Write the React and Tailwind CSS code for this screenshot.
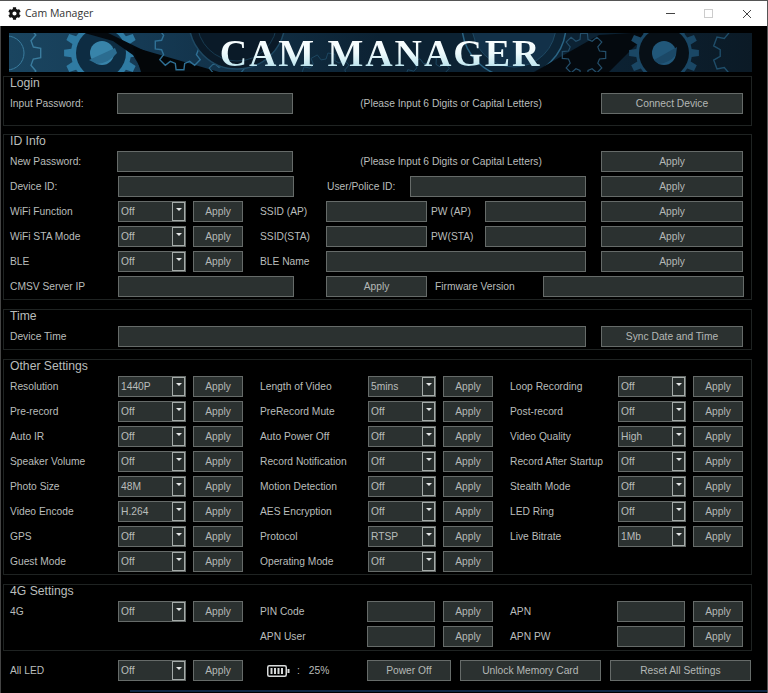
import { FaCog } from 'react-icons/fa';

const gearPath = (cx, cy, r, teeth, depth = 5) => {
  const pts = [];
  const step = (Math.PI * 2) / teeth;
  for (let i = 0; i < teeth; i++) {
    const a = i * step;
    const at = (rad, ang) =>
      `${(cx + rad * Math.cos(ang)).toFixed(1)} ${(cy + rad * Math.sin(ang)).toFixed(1)}`;
    pts.push(at(r - depth, a - step * 0.32));
    pts.push(at(r, a - step * 0.2));
    pts.push(at(r, a + step * 0.2));
    pts.push(at(r - depth, a + step * 0.32));
  }
  return `M${pts.join('L')}Z`;
};

const BannerArt = () => (
  <svg className="absolute inset-0" width="743" height="39" viewBox="0 0 743 39">
    <defs>
      <linearGradient id="bannerBg" x1="0" x2="1" y1="0" y2="0">
        <stop offset="0" stopColor="#1a4560" />
        <stop offset="0.18" stopColor="#153a54" />
        <stop offset="0.5" stopColor="#0c2233" />
        <stop offset="0.8" stopColor="#0c2233" />
        <stop offset="1" stopColor="#0b1a26" />
      </linearGradient>
    </defs>
    <rect width="743" height="39" fill="url(#bannerBg)" />
    {/* left outline gear */}
    <path d={gearPath(-2, 20, 34, 9, 7)} fill="none" stroke="#3a7c9e" strokeWidth="1.4" />
    <circle cx="-2" cy="20" r="17" fill="none" stroke="#3a7c9e" strokeWidth="1" />
    {/* left solid gear */}
    <path d={gearPath(92, 20, 37, 14, 7)} fill="#2f7ba3" />
    <circle cx="92" cy="20" r="25" fill="#0d2c42" />
    <circle cx="93" cy="20" r="12" fill="#3884aa" />
    <path d="M80 27 L106 15 L108 20 Q100 30 88 31 Z" fill="#2b6c90" />
    {/* black sweep across the left gear */}
    <path d="M72 -1 L97 -1 L136 18 L190 39 L134 39 L124 22 L104 8 Z" fill="#04090e" />
    <path d="M124 14 L210 39 L132 39 Z" fill="#030608" />
    {/* middle outline gears */}
    <path d={gearPath(171, 12, 25, 8, 6)} fill="none" stroke="#2f7095" strokeWidth="1.4" />
    <path d={gearPath(218, 48, 22, 8, 6)} fill="none" stroke="#2a6484" strokeWidth="1.2" />
    <circle cx="228" cy="-12" r="48" fill="#0a1a28" stroke="#1e4862" strokeWidth="1.5" />
    <circle cx="228" cy="-12" r="40" fill="none" stroke="#173a50" strokeWidth="1" />
    <path d={gearPath(318, 46, 26, 9, 6)} fill="none" stroke="#1c4660" strokeWidth="1" />
    <path d={gearPath(420, 48, 24, 9, 6)} fill="none" stroke="#1c4660" strokeWidth="1" />
    {/* right side */}
    <circle cx="505" cy="-8" r="52" fill="#0c2436" stroke="#2a6484" strokeWidth="1.5" />
    <circle cx="505" cy="-8" r="42" fill="#123149" stroke="#1e4862" strokeWidth="1" />
    <path d="M525 39 L590 2 L640 -1 L600 39 Z" fill="#04090e" />
    <path d={gearPath(575, 22, 22, 8, 6)} fill="none" stroke="#244f6b" strokeWidth="1.2" />
    <path d={gearPath(655, 20, 35, 14, 7)} fill="#1a4765" />
    <circle cx="655" cy="20" r="25" fill="#070f16" />
    <circle cx="655" cy="20" r="12" fill="#215779" />
    <path d="M645 27 L668 14 L667 22 Q660 30 650 31 Z" fill="#1b4866" />
    <path d={gearPath(738, 20, 34, 9, 7)} fill="none" stroke="#1f4d69" strokeWidth="1.4" />
  </svg>
);

const Label = ({ children, className = '' }) => (
  <span className={`shrink-0 whitespace-nowrap text-[10.25px] text-[#b9bdbb] ${className}`}>{children}</span>
);

const Field = ({ className = '' }) => (
  <div className={`h-[21px] shrink-0 border border-[#666b69] bg-[#2b3130] ${className}`} />
);

const Btn = ({ children = 'Apply', className = 'w-[50px] ml-[7px]' }) => (
  <button
    type="button"
    className={`h-[21px] shrink-0 border border-[#666b69] bg-[#2b3130] pt-[2px] text-center text-[10.25px] leading-none text-[#b4b8b6] ${className}`}
  >
    {children}
  </button>
);

const Select = ({ value = 'Off' }) => (
  <div className="flex h-[21px] w-[68px] shrink-0 items-center justify-between border border-[#666b69] bg-[#2b3130] pl-[2px] text-[10.25px] text-[#b9bdbb]">
    <span>{value}</span>
    <span className="flex h-[19px] w-[13px] justify-center border border-[#a4aaa8] bg-[#272d2c] pt-[5px]">
      <span className="h-0 w-0 border-x-[3px] border-t-[3px] border-x-transparent border-t-[#e6e8e8]" />
    </span>
  </div>
);

const Row = ({ children }) => <div className="flex h-[21px] items-center">{children}</div>;

const Section = ({ title, className, children }) => (
  <section className={`ml-[3px] w-[749px] border border-[#1f2322] pl-[6px] ${className}`}>
    <h2 className="mb-[3px] h-[13px] text-[12.2px] leading-[13px] font-normal text-[#b9bdbb]">{title}</h2>
    <div className="flex flex-col gap-1">{children}</div>
  </section>
);

const Setting = ({ label, value, left = false }) => (
  <>
    <Label className={left ? 'w-[108px]' : 'ml-[17px] w-[108px]'}>{label}</Label>
    <Select value={value} />
    <Btn />
  </>
);

const otherSettings = [
  [['Resolution', '1440P'], ['Length of Video', '5mins'], ['Loop Recording', 'Off']],
  [['Pre-record', 'Off'], ['PreRecord Mute', 'Off'], ['Post-record', 'Off']],
  [['Auto IR', 'Off'], ['Auto Power Off', 'Off'], ['Video Quality', 'High']],
  [['Speaker Volume', 'Off'], ['Record Notification', 'Off'], ['Record After Startup', 'Off']],
  [['Photo Size', '48M'], ['Motion Detection', 'Off'], ['Stealth Mode', 'Off']],
  [['Video Encode', 'H.264'], ['AES Encryption', 'Off'], ['LED Ring', 'Off']],
  [['GPS', 'Off'], ['Protocol', 'RTSP'], ['Live Bitrate', '1Mb']],
  [['Guest Mode', 'Off'], ['Operating Mode', 'Off']],
];

const Battery = () => (
  <svg width="23" height="12" viewBox="0 0 23 12" className="ml-[24px] shrink-0">
    <rect x="0.75" y="0.75" width="18.5" height="10.5" rx="1.5" fill="none" stroke="#d8dada" strokeWidth="1.5" />
    <rect x="3.5" y="3" width="2" height="6" fill="#d8dada" />
    <rect x="7" y="3" width="2" height="6" fill="#d8dada" />
    <rect x="10.5" y="3" width="2" height="6" fill="#d8dada" />
    <rect x="14" y="3" width="2" height="6" fill="#d8dada" />
    <rect x="20.5" y="4" width="2" height="4" fill="#d8dada" />
  </svg>
);

export default function App() {
  return (
    <div className="flex h-[693px] w-[768px] flex-col overflow-hidden border-r border-[#555] bg-black font-['Liberation_Sans',sans-serif] shadow-[inset_1px_0_0_#444]">
      <header className="flex h-[26px] shrink-0 items-center border-t border-[#555] bg-white pl-[8px] text-[#333]">
        <FaCog size={13} className="text-[#111]" />
        <span className="ml-[4px] font-['Open_Sans',sans-serif] text-[10.5px]">Cam Manager</span>
        <div className="ml-auto flex items-center">
          <span className="h-px w-[9px] bg-[#444]" />
          <span className="ml-[29px] h-[9px] w-[9px] border border-[#ccc]" />
          <svg width="10" height="10" viewBox="0 0 10 10" className="mr-[15px] ml-[29px]">
            <path d="M1 1 L9 9 M9 1 L1 9" stroke="#444" strokeWidth="1" />
          </svg>
        </div>
      </header>

      <div className="relative mt-[7px] ml-[9px] flex h-[39px] w-[743px] shrink-0 items-center justify-center overflow-hidden">
        <BannerArt />
        <span className="relative bg-gradient-to-b from-white via-[#eefafc] to-[#a8dce8] bg-clip-text font-['Liberation_Serif',serif] text-[38px] leading-none font-bold tracking-[1.9px] text-transparent">
          CAM MANAGER
        </span>
      </div>

      <Section title="Login" className="mt-[4px] h-[50px]">
        <Row>
          <Label className="w-[107px]">Input Password:</Label>
          <Field className="w-[176px]" />
          <Label className="w-[308px] pl-[8px] text-center">(Please Input 6 Digits or Capital Letters)</Label>
          <Btn className="w-[142px]">Connect Device</Btn>
        </Row>
      </Section>

      <Section title="ID Info" className="mt-[8px] h-[166px]">
        <Row>
          <Label className="w-[107px]">New Password:</Label>
          <Field className="w-[176px]" />
          <Label className="w-[308px] pl-[8px] text-center">(Please Input 6 Digits or Capital Letters)</Label>
          <Btn className="w-[142px]">Apply</Btn>
        </Row>
        <Row>
          <Label className="w-[108px]">Device ID:</Label>
          <Field className="w-[176px]" />
          <Label className="ml-[33px] w-[83px]">User/Police ID:</Label>
          <Field className="w-[176px]" />
          <Btn className="ml-[15px] w-[142px]">Apply</Btn>
        </Row>
        <Row>
          <Setting left label="WiFi Function" />
          <Label className="ml-[17px] w-[66px]">SSID (AP)</Label>
          <Field className="w-[101px]" />
          <Label className="ml-[4px] w-[54px]">PW (AP)</Label>
          <Field className="w-[101px]" />
          <Btn className="ml-[15px] w-[142px]">Apply</Btn>
        </Row>
        <Row>
          <Setting left label="WiFi STA Mode" />
          <Label className="ml-[17px] w-[66px]">SSID(STA)</Label>
          <Field className="w-[101px]" />
          <Label className="ml-[4px] w-[54px]">PW(STA)</Label>
          <Field className="w-[101px]" />
          <Btn className="ml-[15px] w-[142px]">Apply</Btn>
        </Row>
        <Row>
          <Setting left label="BLE" />
          <Label className="ml-[17px] w-[66px]">BLE Name</Label>
          <Field className="w-[260px]" />
          <Btn className="ml-[15px] w-[142px]">Apply</Btn>
        </Row>
        <Row>
          <Label className="w-[108px]">CMSV Server IP</Label>
          <Field className="w-[176px]" />
          <Btn className="ml-[32px] w-[101px]">Apply</Btn>
          <Label className="ml-[8px] w-[108px]">Firmware Version</Label>
          <Field className="w-[201px]" />
        </Row>
      </Section>

      <Section title="Time" className="mt-[9px] h-[41px]">
        <Row>
          <Label className="w-[108px]">Device Time</Label>
          <Field className="w-[468px]" />
          <Btn className="ml-[15px] w-[142px]">Sync Date and Time</Btn>
        </Row>
      </Section>

      <Section title="Other Settings" className="mt-[9px] h-[216px]">
        {otherSettings.map((row) => (
          <Row key={row[0][0]}>
            {row.map(([label, value], i) => (
              <Setting key={label} left={i === 0} label={label} value={value} />
            ))}
          </Row>
        ))}
      </Section>

      <Section title="4G Settings" className="mt-[9px] h-[67px]">
        <Row>
          <Setting left label="4G" />
          <Label className="ml-[17px] w-[107px]">PIN Code</Label>
          <Field className="w-[68px]" />
          <Btn className="ml-[8px] w-[50px]" />
          <Label className="ml-[17px] w-[107px]">APN</Label>
          <Field className="w-[68px]" />
          <Btn className="ml-[8px] w-[50px]" />
        </Row>
        <Row>
          <Label className="ml-[250px] w-[107px]">APN User</Label>
          <Field className="w-[68px]" />
          <Btn className="ml-[8px] w-[50px]" />
          <Label className="ml-[17px] w-[107px]">APN PW</Label>
          <Field className="w-[68px]" />
          <Btn className="ml-[8px] w-[50px]" />
        </Row>
      </Section>

      <div className="mt-[9px] ml-[10px] flex h-[21px] shrink-0 items-center">
        <Setting left label="All LED" />
        <Battery />
        <Label className="ml-[7px]">:</Label>
        <Label className="ml-[9px] w-[58px]">25%</Label>
        <Btn className="w-[84px]">Power Off</Btn>
        <Btn className="ml-[9px] w-[141px]">Unlock Memory Card</Btn>
        <Btn className="ml-[9px] w-[141px]">Reset All Settings</Btn>
      </div>

      <div className="mt-auto mb-px ml-[130px] h-[2px] shrink-0 bg-[#0f2744]" />
    </div>
  );
}
